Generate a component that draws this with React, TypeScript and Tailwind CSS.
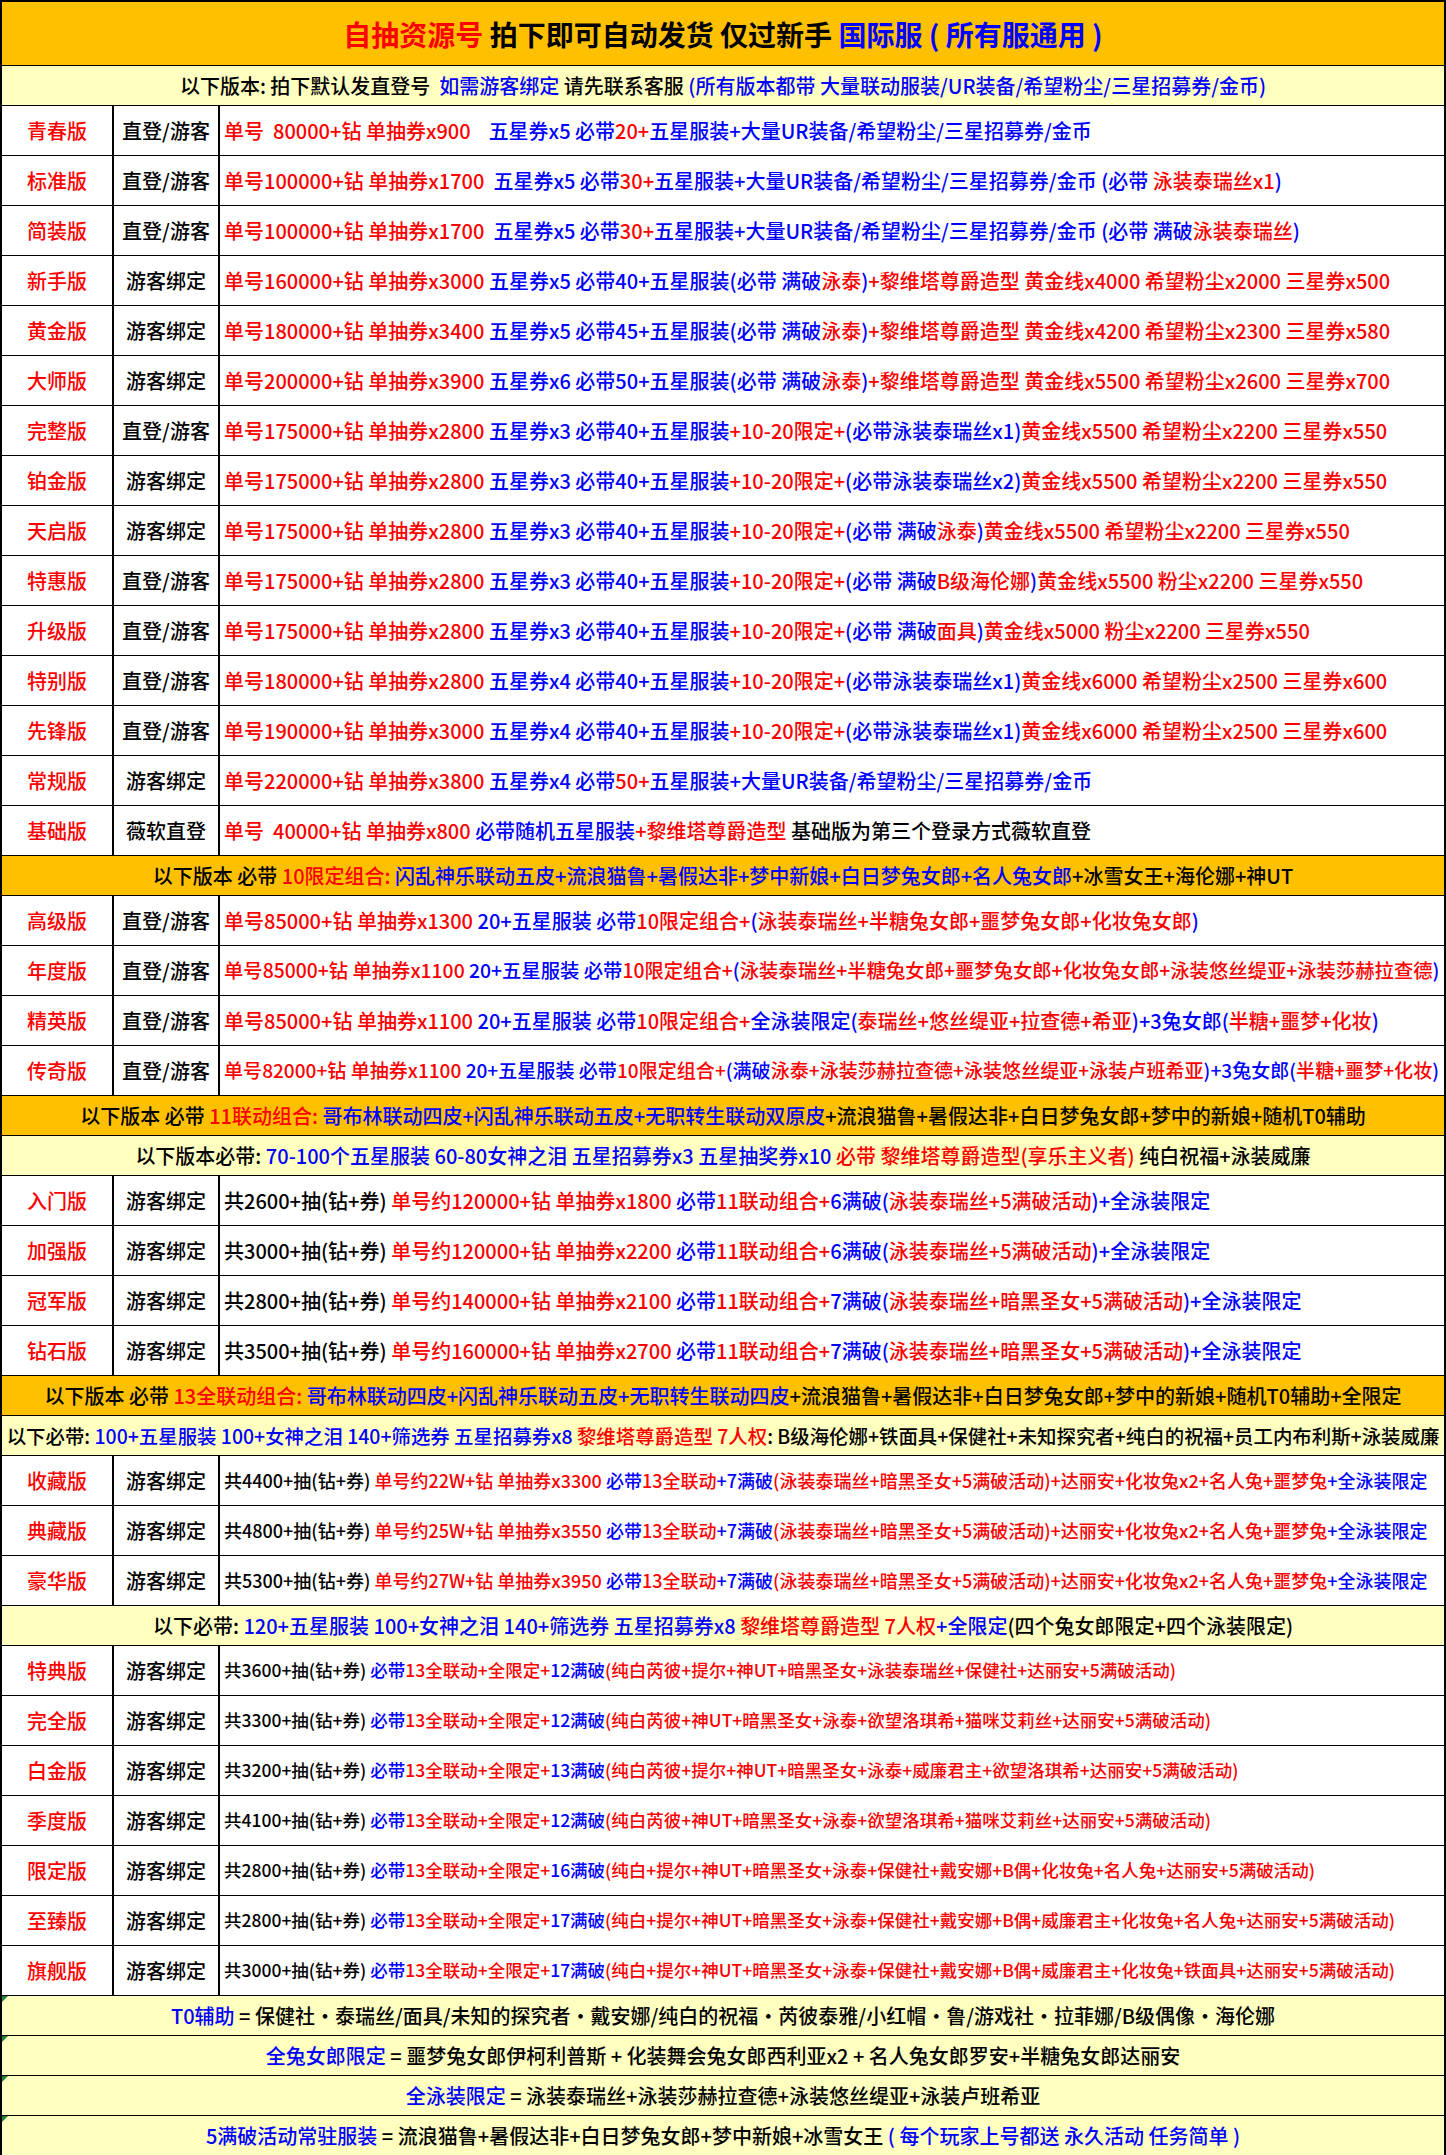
import { useLayoutEffect, useRef, useState, type ReactNode } from "react";

// colour codes used in the row strings: {r} red, {b} blue, {k} black
const tone: Record<string, string> = {
  r: "text-[#ff0000]",
  b: "text-[#0000ff]",
  k: "text-black",
};

const Rich = ({ src }: { src: string }) => {
  const parts = src.split(/\{([rbk])\}/);
  const out: ReactNode[] = [];
  let code = "k";
  parts.forEach((p, i) => {
    if (i % 2 === 1) code = p;
    else if (p) out.push(<span key={i} className={tone[code]}>{p}</span>);
  });
  return <>{out}</>;
};

// excel-like "shrink to fit": text that is too long for its cell gets a smaller font
const Fit = ({ className, children }: { className: string; children: ReactNode }) => {
  const box = useRef<HTMLDivElement>(null);
  const txt = useRef<HTMLSpanElement>(null);
  const [fs, setFs] = useState<number>();

  useLayoutEffect(() => {
    const b = box.current;
    const t = txt.current;
    if (!b || !t) return;
    const cs = getComputedStyle(b);
    const avail = b.clientWidth - parseFloat(cs.paddingLeft) - parseFloat(cs.paddingRight);
    const w = t.getBoundingClientRect().width;
    if (w > avail) setFs(parseFloat(getComputedStyle(t).fontSize) * (avail / w));
  }, []);

  return (
    <div ref={box} className={className}>
      <span ref={txt} className="whitespace-pre" style={fs ? { fontSize: fs } : undefined}>
        {children}
      </span>
    </div>
  );
};

type Row = [string, string, string];

const part1: Row[] = [
  ["青春版", "直登/游客", "{r}单号  80000+钻 单抽券x900    {b}五星券x5 必带{r}20+{b}五星服装+大量UR装备/希望粉尘/三星招募券/金币"],
  ["标准版", "直登/游客", "{r}单号100000+钻 单抽券x1700  {b}五星券x5 必带{r}30+{b}五星服装+大量UR装备/希望粉尘/三星招募券/金币 (必带 {r}泳装泰瑞丝x1{b})"],
  ["简装版", "直登/游客", "{r}单号100000+钻 单抽券x1700  {b}五星券x5 必带{r}30+{b}五星服装+大量UR装备/希望粉尘/三星招募券/金币 (必带 满破{r}泳装泰瑞丝{b})"],
  ["新手版", "游客绑定", "{r}单号160000+钻 单抽券x3000 {b}五星券x5 必带40+五星服装(必带 满破{r}泳泰{b}){r}+黎维塔尊爵造型 黄金线x4000 希望粉尘x2000 三星券x500"],
  ["黄金版", "游客绑定", "{r}单号180000+钻 单抽券x3400 {b}五星券x5 必带45+五星服装(必带 满破{r}泳泰{b}){r}+黎维塔尊爵造型 黄金线x4200 希望粉尘x2300 三星券x580"],
  ["大师版", "游客绑定", "{r}单号200000+钻 单抽券x3900 {b}五星券x6 必带50+五星服装(必带 满破{r}泳泰{b}){r}+黎维塔尊爵造型 黄金线x5500 希望粉尘x2600 三星券x700"],
  ["完整版", "直登/游客", "{r}单号175000+钻 单抽券x2800 {b}五星券x3 必带40+五星服装{r}+10-20限定+{b}(必带泳装泰瑞丝x1){r}黄金线x5500 希望粉尘x2200 三星券x550"],
  ["铂金版", "游客绑定", "{r}单号175000+钻 单抽券x2800 {b}五星券x3 必带40+五星服装{r}+10-20限定+{b}(必带泳装泰瑞丝x2){r}黄金线x5500 希望粉尘x2200 三星券x550"],
  ["天启版", "游客绑定", "{r}单号175000+钻 单抽券x2800 {b}五星券x3 必带40+五星服装{r}+10-20限定+{b}(必带 满破{r}泳泰{b}){r}黄金线x5500 希望粉尘x2200 三星券x550"],
  ["特惠版", "直登/游客", "{r}单号175000+钻 单抽券x2800 {b}五星券x3 必带40+五星服装{r}+10-20限定+{b}(必带 满破{r}B级海伦娜{b}){r}黄金线x5500 粉尘x2200 三星券x550"],
  ["升级版", "直登/游客", "{r}单号175000+钻 单抽券x2800 {b}五星券x3 必带40+五星服装{r}+10-20限定+{b}(必带 满破{r}面具{b}){r}黄金线x5000 粉尘x2200 三星券x550"],
  ["特别版", "直登/游客", "{r}单号180000+钻 单抽券x2800 {b}五星券x4 必带40+五星服装{r}+10-20限定+{b}(必带泳装泰瑞丝x1){r}黄金线x6000 希望粉尘x2500 三星券x600"],
  ["先锋版", "直登/游客", "{r}单号190000+钻 单抽券x3000 {b}五星券x4 必带40+五星服装{r}+10-20限定+{b}(必带泳装泰瑞丝x1){r}黄金线x6000 希望粉尘x2500 三星券x600"],
  ["常规版", "游客绑定", "{r}单号220000+钻 单抽券x3800 {b}五星券x4 必带{r}50+{b}五星服装+大量UR装备/希望粉尘/三星招募券/金币"],
  ["基础版", "薇软直登", "{r}单号  40000+钻 单抽券x800 {b}必带随机五星服装{r}+黎维塔尊爵造型 {k}基础版为第三个登录方式薇软直登"],
];

const part2: Row[] = [
  ["高级版", "直登/游客", "{r}单号85000+钻 单抽券x1300 {b}20+五星服装 必带{r}10限定组合+{b}({r}泳装泰瑞丝+半糖兔女郎+噩梦兔女郎+化妆兔女郎{b})"],
  ["年度版", "直登/游客", "{r}单号85000+钻 单抽券x1100 {b}20+五星服装 必带{r}10限定组合+{b}({r}泳装泰瑞丝+半糖兔女郎+噩梦兔女郎+化妆兔女郎+泳装悠丝缇亚+泳装莎赫拉查德{b})"],
  ["精英版", "直登/游客", "{r}单号85000+钻 单抽券x1100 {b}20+五星服装 必带{r}10限定组合+{b}全泳装限定({r}泰瑞丝+悠丝缇亚+拉查德+希亚{b})+3兔女郎({r}半糖+噩梦+化妆{b})"],
  ["传奇版", "直登/游客", "{r}单号82000+钻 单抽券x1100 {b}20+五星服装 必带{r}10限定组合+{b}(满破{r}泳泰+泳装莎赫拉查德+泳装悠丝缇亚+泳装卢班希亚{b})+3兔女郎({r}半糖+噩梦+化妆{b})"],
];

const part3: Row[] = [
  ["入门版", "游客绑定", "{k}共2600+抽(钻+券) {r}单号约120000+钻 单抽券x1800 {b}必带{r}11联动组合+{b}6满破({r}泳装泰瑞丝+5满破活动{b})+全泳装限定"],
  ["加强版", "游客绑定", "{k}共3000+抽(钻+券) {r}单号约120000+钻 单抽券x2200 {b}必带{r}11联动组合+{b}6满破({r}泳装泰瑞丝+5满破活动{b})+全泳装限定"],
  ["冠军版", "游客绑定", "{k}共2800+抽(钻+券) {r}单号约140000+钻 单抽券x2100 {b}必带{r}11联动组合+{b}7满破({r}泳装泰瑞丝+暗黑圣女+5满破活动{b})+全泳装限定"],
  ["钻石版", "游客绑定", "{k}共3500+抽(钻+券) {r}单号约160000+钻 单抽券x2700 {b}必带{r}11联动组合+{b}7满破({r}泳装泰瑞丝+暗黑圣女+5满破活动{b})+全泳装限定"],
];

const part4: Row[] = [
  ["收藏版", "游客绑定", "{k}共4400+抽(钻+券) {r}单号约22W+钻 单抽券x3300 {b}必带{r}13全联动{b}+7满破{r}(泳装泰瑞丝+暗黑圣女+5满破活动)+达丽安+化妆兔x2+名人兔+噩梦兔{b}+全泳装限定"],
  ["典藏版", "游客绑定", "{k}共4800+抽(钻+券) {r}单号约25W+钻 单抽券x3550 {b}必带{r}13全联动{b}+7满破{r}(泳装泰瑞丝+暗黑圣女+5满破活动)+达丽安+化妆兔x2+名人兔+噩梦兔{b}+全泳装限定"],
  ["豪华版", "游客绑定", "{k}共5300+抽(钻+券) {r}单号约27W+钻 单抽券x3950 {b}必带{r}13全联动{b}+7满破{r}(泳装泰瑞丝+暗黑圣女+5满破活动)+达丽安+化妆兔x2+名人兔+噩梦兔{b}+全泳装限定"],
];

const part5: Row[] = [
  ["特典版", "游客绑定", "{k}共3600+抽(钻+券) {b}必带{r}13全联动+全限定+{b}12满破{r}(纯白芮彼+提尔+神UT+暗黑圣女+泳装泰瑞丝+保健社+达丽安+5满破活动)"],
  ["完全版", "游客绑定", "{k}共3300+抽(钻+券) {b}必带{r}13全联动+全限定+{b}12满破{r}(纯白芮彼+神UT+暗黑圣女+泳泰+欲望洛琪希+猫咪艾莉丝+达丽安+5满破活动)"],
  ["白金版", "游客绑定", "{k}共3200+抽(钻+券) {b}必带{r}13全联动+全限定+{b}13满破{r}(纯白芮彼+提尔+神UT+暗黑圣女+泳泰+威廉君主+欲望洛琪希+达丽安+5满破活动)"],
  ["季度版", "游客绑定", "{k}共4100+抽(钻+券) {b}必带{r}13全联动+全限定+{b}12满破{r}(纯白芮彼+神UT+暗黑圣女+泳泰+欲望洛琪希+猫咪艾莉丝+达丽安+5满破活动)"],
  ["限定版", "游客绑定", "{k}共2800+抽(钻+券) {b}必带{r}13全联动+全限定+{b}16满破{r}(纯白+提尔+神UT+暗黑圣女+泳泰+保健社+戴安娜+B偶+化妆兔+名人兔+达丽安+5满破活动)"],
  ["至臻版", "游客绑定", "{k}共2800+抽(钻+券) {b}必带{r}13全联动+全限定+{b}17满破{r}(纯白+提尔+神UT+暗黑圣女+泳泰+保健社+戴安娜+B偶+威廉君主+化妆兔+名人兔+达丽安+5满破活动)"],
  ["旗舰版", "游客绑定", "{k}共3000+抽(钻+券) {b}必带{r}13全联动+全限定+{b}17满破{r}(纯白+提尔+神UT+暗黑圣女+泳泰+保健社+戴安娜+B偶+威廉君主+化妆兔+铁面具+达丽安+5满破活动)"],
];

const footers = [
  "{b}T0辅助{k} = 保健社·泰瑞丝/面具/未知的探究者·戴安娜/纯白的祝福·芮彼泰雅/小红帽·鲁/游戏社·拉菲娜/B级偶像·海伦娜",
  "{b}全兔女郎限定{k} = 噩梦兔女郎伊柯利普斯 + 化装舞会兔女郎西利亚x2 + 名人兔女郎罗安+半糖兔女郎达丽安",
  "{b}全泳装限定{k} = 泳装泰瑞丝+泳装莎赫拉查德+泳装悠丝缇亚+泳装卢班希亚",
  "{b}5满破活动常驻服装{k} = 流浪猫鲁+暑假达非+白日梦兔女郎+梦中新娘+冰雪女王 {b}( 每个玩家上号都送 永久活动 任务简单 )",
];

const Rows = ({ rows, size }: { rows: Row[]; size?: "md" | "sm" }) => (
  <>
    {rows.map(([name, login, text]) => (
      <div key={name} className="flex h-[50px] border-b border-black bg-white text-[20px]">
        <div className="w-[112px] shrink-0 border-r-2 border-black flex items-center justify-center text-[#ff0000]">
          {name}
        </div>
        <div className="w-[106px] shrink-0 border-r-2 border-black flex items-center justify-center text-black">
          {login}
        </div>
        <Fit
          className={`flex-1 min-w-0 flex items-center pl-1 pr-1 overflow-hidden ${
            size === "md" ? "text-[18px]" : size === "sm" ? "text-[17.5px]" : "text-[20px]"
          }`}
        >
          <Rich src={text} />
        </Fit>
      </div>
    ))}
  </>
);

const Band = ({ text, light }: { text: string; light?: boolean }) => (
  <Fit
    className={`h-[40px] border-b border-black flex items-center justify-center px-1 overflow-hidden text-[20px] ${
      light ? "bg-[#ffffc0]" : "bg-[#ffc000]"
    }`}
  >
    <Rich src={text} />
  </Fit>
);

export default function App() {
  return (
    <div className="w-[1446px] bg-white font-medium font-['Noto_Sans_CJK_SC','Noto_Sans',sans-serif]">
      <div className="border-2 border-b-0 border-black">
        {/* title */}
        <div className="h-[64px] border-b border-black bg-[#ffc000] flex items-center justify-center text-[28px] font-bold whitespace-pre">
          <span className="text-[#ff0000]">自抽资源号</span>
          <span className="text-black"> 拍下即可自动发货 仅过新手 </span>
          <span className="text-[#0000ff]">国际服 ( 所有服通用 )</span>
        </div>

        <Band light text="{k}以下版本: 拍下默认发直登号  {b}如需游客绑定 {k}请先联系客服 {b}(所有版本都带 大量联动服装/UR装备/希望粉尘/三星招募券/金币)" />
        <Rows rows={part1} />

        <Band text="{k}以下版本 必带 {r}10限定组合: {b}闪乱神乐联动五皮+流浪猫鲁+暑假达非+梦中新娘+白日梦兔女郎+名人兔女郎{k}+冰雪女王+海伦娜+神UT" />
        <Rows rows={part2} />

        <Band text="{k}以下版本 必带 {r}11联动组合: {b}哥布林联动四皮+闪乱神乐联动五皮+无职转生联动双原皮{k}+流浪猫鲁+暑假达非+白日梦兔女郎+梦中的新娘+随机T0辅助" />
        <Band light text="{k}以下版本必带: {b}70-100个五星服装 60-80女神之泪 五星招募券x3 五星抽奖券x10 {r}必带 黎维塔尊爵造型(享乐主义者) {k}纯白祝福+泳装威廉" />
        <Rows rows={part3} />

        <Band text="{k}以下版本 必带 {r}13全联动组合: {b}哥布林联动四皮+闪乱神乐联动五皮+无职转生联动四皮{k}+流浪猫鲁+暑假达非+白日梦兔女郎+梦中的新娘+随机T0辅助+全限定" />
        <Band light text="{k}以下必带: {b}100+五星服装 100+女神之泪 140+筛选券 五星招募券x8 {r}黎维塔尊爵造型 7人权{k}: B级海伦娜+铁面具+保健社+未知探究者+纯白的祝福+员工内布利斯+泳装威廉" />
        <Rows rows={part4} size="md" />

        <Band light text="{k}以下必带: {b}120+五星服装 100+女神之泪 140+筛选券 五星招募券x8 {r}黎维塔尊爵造型 7人权{b}+全限定{k}(四个兔女郎限定+四个泳装限定)" />
        <Rows rows={part5} size="sm" />

        {footers.map((f) => (
          <div key={f} className="relative">
            <span className="absolute left-0 top-0 border-t-[6px] border-r-[6px] border-t-[#208040] border-r-transparent" />
            <Band light text={f} />
          </div>
        ))}
      </div>
    </div>
  );
}
